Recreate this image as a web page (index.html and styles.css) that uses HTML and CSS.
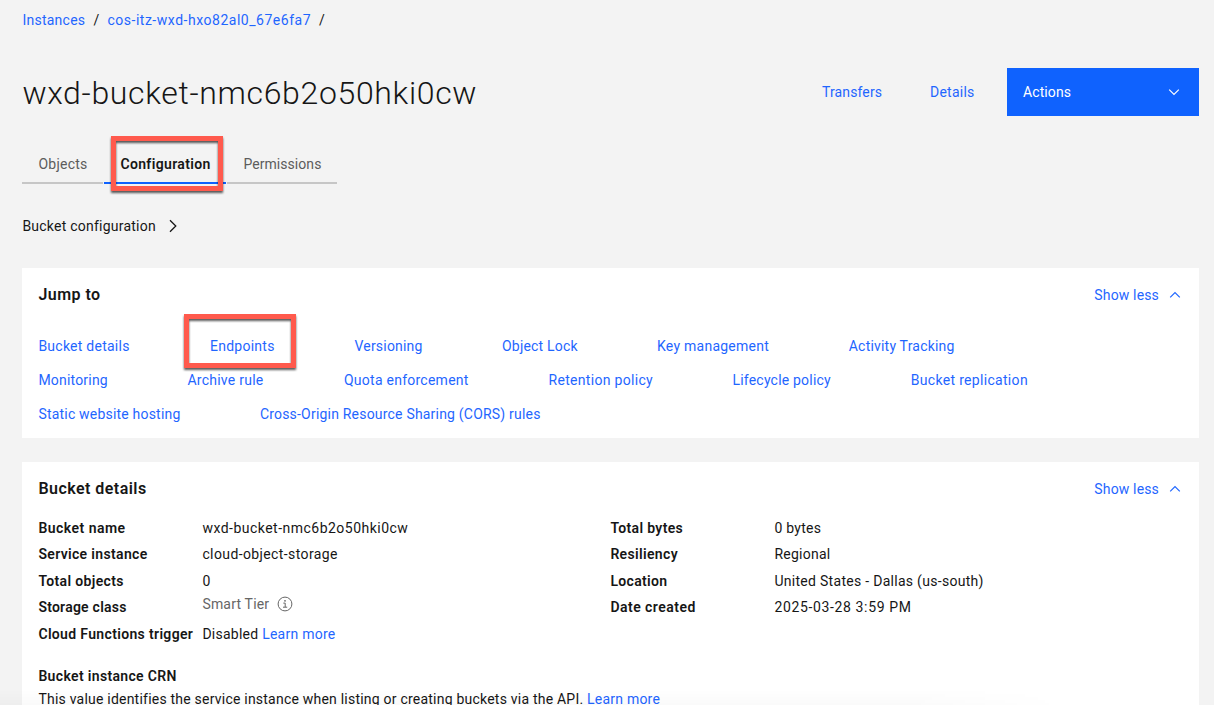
FILE: index.html
```html
<!DOCTYPE html>
<html lang="en">
<head>
<meta charset="utf-8">
<title>Bucket configuration</title>
<link rel="stylesheet" href="styles.css">
</head>
<body>
<main class="page">
  <nav class="breadcrumb">
    <a class="crumb-root">Instances</a><span class="slash">/</span><a class="crumb-id">cos-itz-wxd-hxo82al0_67e6fa7</a><span class="slash">/</span>
  </nav>
  <header class="header">
    <h1 class="title">wxd-bucket-nmc6b2o50hki0cw</h1>
    <a class="transfers">Transfers</a>
    <a class="details-link">Details</a>
    <button class="actions"><span>Actions</span>
      <svg class="chevron" viewBox="0 0 16 16"><path d="M3.2 5.7 8 10.5l4.8-4.8"/></svg>
    </button>
  </header>
  <div class="tabs">
    <div class="tab">Objects</div>
    <div class="tab tab-active">Configuration<span class="callout callout-tab"></span></div>
    <div class="tab tab-permissions">Permissions</div>
  </div>
  <div class="section-path">Bucket configuration
    <svg class="path-arrow" viewBox="0 0 16 16"><path d="m5 2.2 5.8 5.8L5 13.8"/></svg>
  </div>

  <section class="card jump">
    <div class="card-head">
      <h2>Jump to</h2>
      <a class="toggle">Show less <svg class="chevron" viewBox="0 0 16 16"><path d="M3.2 10.3 8 5.5l4.8 4.8"/></svg></a>
    </div>
    <div class="links links-first">
      <a>Bucket details</a><a class="marked">Endpoints<span class="callout callout-link"></span></a><a class="tight">Versioning</a><a class="tight">Object Lock</a><a>Key management</a><a class="tight">Activity Tracking</a>
    </div>
    <div class="links links-second">
      <a class="tight">Monitoring</a><a>Archive rule</a><a>Quota enforcement</a><a class="loose">Retention policy</a><a class="tight">Lifecycle policy</a><a class="loose">Bucket replication</a>
    </div>
    <div class="links links-third">
      <a class="tight">Static website hosting</a><a class="tight">Cross-Origin Resource Sharing (CORS) rules</a>
    </div>
  </section>

  <section class="card details">
    <div class="card-head">
      <h2>Bucket details</h2>
      <a class="toggle">Show less <svg class="chevron" viewBox="0 0 16 16"><path d="M3.2 10.3 8 5.5l4.8 4.8"/></svg></a>
    </div>
    <div class="columns">
      <dl class="facts">
        <dt class="loose-bold">Bucket name</dt><dd class="code">wxd-bucket-nmc6b2o50hki0cw</dd>
        <dt>Service instance</dt><dd class="name">cloud-object-storage</dd>
        <dt>Total objects</dt><dd>0</dd>
        <dt class="tight-bold">Storage class</dt>
        <dd class="tier">Smart Tier
          <svg class="info" viewBox="0 0 16 16"><circle cx="8" cy="8" r="6.9"/><path d="M6.3 7.1h1.9v4M6 11.2h4.2"/><circle class="dot" cx="8" cy="4.8" r=".9"/></svg>
        </dd>
        <dt>Cloud Functions trigger</dt><dd>Disabled <a>Learn more</a></dd>
      </dl>
      <dl class="facts">
        <dt>Total bytes</dt><dd>0 bytes</dd>
        <dt>Resiliency</dt><dd>Regional</dd>
        <dt>Location</dt><dd class="place">United States - Dallas (us-south)</dd>
        <dt class="loose-bold">Date created</dt><dd class="date">2025-03-28 3:59 PM</dd>
      </dl>
    </div>
    <h3>Bucket instance CRN</h3>
    <p class="note">This value identifies the service instance when listing or creating buckets via the API. <a>Learn more</a></p>
  </section>
  <div class="bottom-fade"></div>
</main>
</body>
</html>
```
FILE: styles.css
```css
* { box-sizing: border-box; }
body {
  margin: 0;
  background: #f3f3f3;
  color: #161616;
  font: 14px/20px Roboto, "Liberation Sans", sans-serif;
  letter-spacing: .25px;
}
h1, h2, h3, p, dl, dd { margin: 0; }
a { color: #1f66ff; }
svg { fill: none; stroke: currentColor; flex: none; }
.page {
  position: relative;
  height: 705px;
  overflow: hidden;
  padding: 10px 15px 0 22.4px;
}

.breadcrumb { display: flex; height: 20px; }
.crumb-root { width: 63px; }
.crumb-id { width: 203.5px; letter-spacing: .52px; white-space: nowrap; }
.slash { width: 22px; padding-left: 8px; }

.header { display: flex; align-items: center; height: 48px; margin-top: 38px; }
.title { flex: 1; font-size: 32px; line-height: 48px; font-weight: 300; letter-spacing: .66px; padding-top: 2px; }
.transfers { width: 108px; letter-spacing: .13px; }
.details-link { width: 77px; }
.actions {
  display: flex; align-items: center; justify-content: space-between;
  width: 192px; height: 48px; padding: 0 17px 0 16px;
  border: 0; background: #0f62fe; color: #fff;
  font: inherit; letter-spacing: .1px;
}
.chevron { width: 16px; height: 16px; stroke-width: 1.2; }

.tabs { display: flex; gap: 1px; margin-top: 28px; height: 40px; }
.tab {
  width: 81px; height: 40px; padding: 10px 0 0 16px;
  border-bottom: 2px solid #c6c6c6; color: #5c5c5c;
}
.tab-active {
  position: relative; width: 122px; padding-left: 16px;
  border-color: #0f62fe; color: #161616; font-weight: 600; letter-spacing: .36px;
}
.tab-permissions { width: 110px; letter-spacing: .06px; }
.section-path { display: flex; align-items: center; gap: 9px; height: 20px; margin-top: 32px; letter-spacing: .23px; }
.path-arrow { width: 16px; height: 16px; stroke-width: 1.3; }

.callout {
  position: absolute;
  border: 5px solid #ff5a4d;
  filter: drop-shadow(0 2.5px 1px rgba(0, 0, 0, .65));
}
.callout-tab { left: 7px; top: -8px; width: 112px; height: 55px; }
.callout-link { left: -26px; top: -22px; width: 112px; height: 54px; }

.card { padding: 0 16px; background: #fff; }
.jump { height: 170px; margin-top: 32px; }
.details { height: 260px; margin-top: 24px; }
.card-head { display: flex; justify-content: space-between; align-items: center; height: 54px; }
h2 { font-size: 16px; line-height: 22px; font-weight: 600; letter-spacing: .46px; }
.toggle { display: flex; align-items: center; gap: 8px; letter-spacing: .15px; }
.links { display: grid; height: 34px; white-space: nowrap; }
.links-first { grid-template-columns: 171.6px 144.5px 147.5px 155px 191.8px auto; margin-top: 14px; }
.links-second { grid-template-columns: 149px 156.6px 204.5px 184px 178.3px auto; }
.links-third { grid-template-columns: 221.5px auto; }
.marked { position: relative; }
.tight { letter-spacing: .2px; }
.loose { letter-spacing: .31px; }

.columns { display: flex; margin-top: 2px; }
.facts {
  display: grid; grid-template-columns: 164px auto; grid-auto-rows: 26.4px;
  align-content: start; width: 572px; white-space: nowrap;
}
dt, h3 { font-size: 14px; font-weight: 600; letter-spacing: .34px; }
.loose-bold { letter-spacing: .47px; }
.tight-bold { letter-spacing: .24px; }
.code { letter-spacing: .48px; }
.name { letter-spacing: .39px; }
.place { letter-spacing: .29px; }
.date { letter-spacing: .64px; }
.tier { display: flex; align-items: center; gap: 8px; height: 20px; margin-top: -3px; color: #666; letter-spacing: .19px; }
.info { width: 16px; height: 16px; stroke-width: 1; }
.info .dot { fill: currentColor; stroke: none; }
h3 { line-height: 20px; margin-top: 16px; }
.note { margin-top: 3.5px; letter-spacing: .22px; }
.bottom-fade {
  position: absolute; left: 0; bottom: 0; width: 1065px; height: 16px;
  background: linear-gradient(rgba(0, 0, 0, 0), rgba(0, 0, 0, .02));
  mask-image: linear-gradient(to right, #000 85%, transparent);
}
```
